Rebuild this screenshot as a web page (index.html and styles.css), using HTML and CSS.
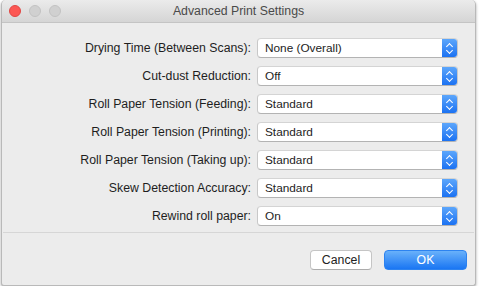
FILE: index.html
```html
<!DOCTYPE html>
<html lang="en">

<head>
    <meta charset="UTF-8" />
    <title>Advanced Print Settings</title>
    <link rel="stylesheet" href="styles.css">
</head>

<body>
    <div class="window">
        <div class="titlebar">
            <div class="lights">
                <span class="light close"></span>
                <span class="light"></span>
                <span class="light"></span>
            </div>
            <div class="title">Advanced Print Settings</div>
        </div>

        <div class="settings">
            <label>Drying Time (Between Scans):</label>
            <div class="popup"><span>None (Overall)</span><i class="arrows"></i></div>

            <label>Cut-dust Reduction:</label>
            <div class="popup"><span>Off</span><i class="arrows"></i></div>

            <label>Roll Paper Tension (Feeding):</label>
            <div class="popup"><span>Standard</span><i class="arrows"></i></div>

            <label>Roll Paper Tension (Printing):</label>
            <div class="popup"><span>Standard</span><i class="arrows"></i></div>

            <label>Roll Paper Tension (Taking up):</label>
            <div class="popup"><span>Standard</span><i class="arrows"></i></div>

            <label>Skew Detection Accuracy:</label>
            <div class="popup"><span>Standard</span><i class="arrows"></i></div>

            <label>Rewind roll paper:</label>
            <div class="popup"><span>On</span><i class="arrows"></i></div>
        </div>

        <div class="footer">
            <button class="btn">Cancel</button>
            <button class="btn primary">OK</button>
        </div>
    </div>
</body>

</html>
```

FILE: styles.css
```css
* {
    box-sizing: border-box;
}

body {
    margin: 0;
    background: #ffffff;
    font-family: "Liberation Sans", Arial, sans-serif;
    font-size: 12.3px;
    color: #222;
}

.window {
    margin-left: 1px;
    width: 475px;
    height: 286px;
    background: #ececec;
    border: 1px solid #b9b9b9;
    border-top: none;
    border-radius: 5px 5px 3px 3px;
    box-shadow: 0 1px 3px rgba(0, 0, 0, 0.35);
    overflow: hidden;
}

/* Title bar */
.titlebar {
    position: relative;
    height: 23px;
    background: linear-gradient(#ebebeb, #d5d5d5);
    border-bottom: 1px solid #c4c4c4;
    display: flex;
    align-items: center;
    justify-content: center;
}

.lights {
    position: absolute;
    left: 7px;
    top: 5px;
    display: flex;
    gap: 8px;
}

.light {
    width: 12px;
    height: 12px;
    border-radius: 50%;
    background: #d0d0d0;
    border: 1px solid #c2c2c2;
}

.light.close {
    background: #fc5753;
    border-color: #df4744;
}

.title {
    color: #4a4a4a;
    font-size: 12.3px;
}

/* Settings grid */
.settings {
    display: grid;
    grid-template-columns: 248px 201px;
    column-gap: 6px;
    row-gap: 8px;
    padding-top: 15px;
    padding-bottom: 6px;
    border-bottom: 1px solid #d6d6d6;
    margin: 0 1px;
}

.settings label {
    text-align: right;
    line-height: 20px;
    color: #1e1e1e;
}

.popup {
    height: 20px;
    display: flex;
    background: #ffffff;
    border: 1px solid #c8c8c8;
    border-top-color: #d4d4d4;
    border-bottom-color: #b3b3b3;
    border-radius: 4px;
    overflow: hidden;
}

.popup span {
    flex: 1;
    padding-left: 7px;
    line-height: 18px;
    font-size: 11.8px;
}

.arrows {
    position: relative;
    width: 15px;
    background: linear-gradient(#5ca6fb, #1c72f2);
}

.arrows::before,
.arrows::after {
    content: "";
    position: absolute;
    left: 5px;
    width: 4px;
    height: 4px;
    border-left: 1.3px solid #fff;
    border-top: 1.3px solid #fff;
}

.arrows::before {
    top: 5px;
    transform: rotate(45deg);
}

.arrows::after {
    top: 9px;
    transform: rotate(225deg);
}

/* Buttons */
.footer {
    display: flex;
    justify-content: flex-end;
    gap: 12px;
    padding: 17px 8px 0 0;
}

.btn {
    height: 20px;
    font-family: inherit;
    font-size: 12.3px;
    border-radius: 4px;
    border: 1px solid #c5c5c5;
    border-bottom-color: #acacac;
    background: #ffffff;
    color: #222;
    padding: 0;
    width: 62px;
}

.btn.primary {
    width: 83px;
    color: #ffffff;
    border-color: #2d83f0;
    background: linear-gradient(#69b1fa, #1a76f3);
}
```
